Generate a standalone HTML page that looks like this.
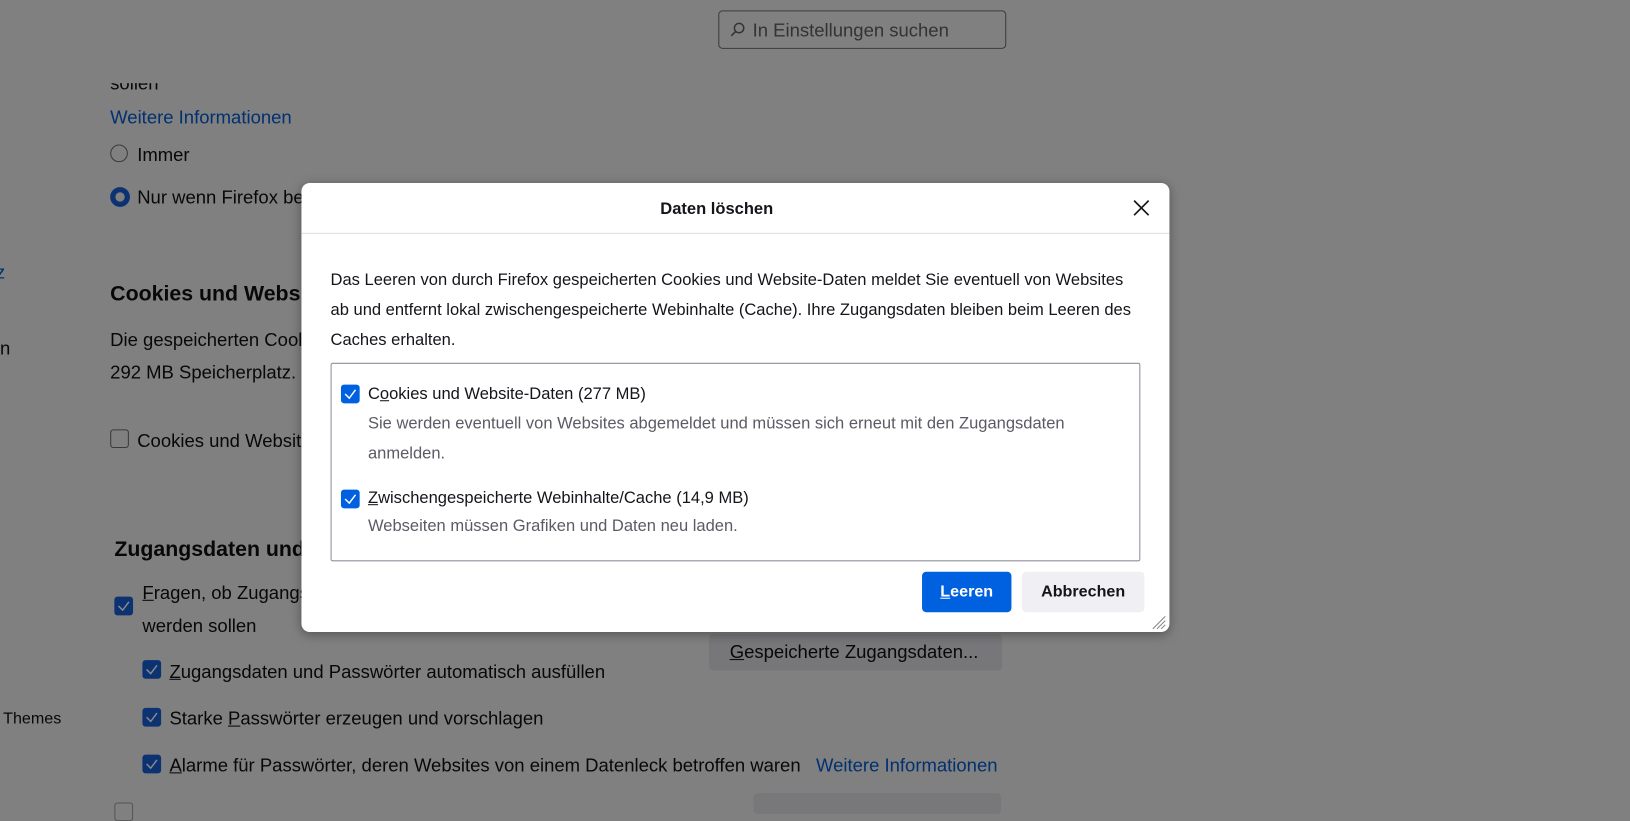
<!DOCTYPE html>
<html><head><meta charset="utf-8"><style>
html,body{margin:0;padding:0;width:1630px;height:806px;overflow:hidden;background:#808080}
#w{position:absolute;left:0;top:0;width:1568px;height:775px;transform:scale(1.0395);transform-origin:0 0;font-family:"Liberation Sans",sans-serif;color:#080808}
.a{position:absolute;white-space:nowrap}
.t{font-size:17.8px}
.lk{color:#003070}
.cb{position:absolute;width:18px;height:18px;border-radius:3px;background:#0c3272}
.cb svg{position:absolute;left:2px;top:2px}
.ucb{position:absolute;width:16px;height:16px;border:1px solid #3a3a3a;border-radius:3px}
.dlg{position:absolute;left:290px;top:176px;width:835px;height:432px;background:#fff;border-radius:8px;box-shadow:0 2px 10px rgba(0,0,0,.35)}
.d{font-size:15.9px;color:#15141a}
.g{color:#5b5b66}
.ck{position:absolute;width:18px;height:18px;border-radius:3px;background:#0061e0}
.ck svg{position:absolute;left:2px;top:2px}
u{text-decoration:underline}
</style></head><body><div id="w">
<div class="a" style="left:691px;top:10px;width:275px;height:35px;border:1px solid #3c3c3c;border-radius:4px"></div>
<svg class="a" style="left:702px;top:21px" width="15" height="15" viewBox="0 0 15 15"><circle cx="9" cy="6" r="4.5" fill="none" stroke="#333" stroke-width="1.4"/><path d="M6 9 L1.5 13.5" stroke="#333" stroke-width="1.5"/></svg>
<div class="a t" style="left:724px;top:19px;color:#333">In Einstellungen suchen</div>
<div class="a t" style="left:106px;top:70px;clip-path:inset(10px 0 0 0)">sollen</div>
<div class="a t lk" style="left:106px;top:103px">Weitere Informationen</div>
<div class="a" style="left:106px;top:139px;width:17px;height:17px;border:1px solid #3a3a3a;border-radius:50%;box-sizing:border-box"></div>
<div class="a t" style="left:132px;top:139px">Immer</div>
<div class="a" style="left:106px;top:180px;width:19px;height:19px;border-radius:50%;background:#0c3272;box-sizing:border-box;border:5px solid #0c3272"><div style="width:9px;height:9px;border-radius:50%;background:#808080"></div></div>
<div class="a t" style="left:132px;top:180px">Nur wenn Firefox be</div>
<div class="a t lk" style="left:-4px;top:252px">z</div>
<div class="a" style="left:106px;top:271px;font-size:20.5px;font-weight:bold">Cookies und Websit</div>
<div class="a t" style="left:0;top:325px">n</div>
<div class="a t" style="left:106px;top:317px">Die gespeicherten Cool</div>
<div class="a t" style="left:106px;top:348px">292 MB Speicherplatz.</div>
<div class="ucb" style="left:106px;top:413px"></div>
<div class="a t" style="left:132px;top:414px">Cookies und Websit</div>
<div class="a" style="left:110px;top:517px;font-size:20.5px;font-weight:bold">Zugangsdaten und</div>
<div class="cb" style="left:110px;top:574px"><svg width="14" height="14"><path d="M2 7 L6 11 L12 3" fill="none" stroke="#8a8a8a" stroke-width="1.4"/></svg></div>
<div class="a t" style="left:137px;top:560px"><u>F</u>ragen, ob Zugangs</div>
<div class="a t" style="left:137px;top:592px">werden sollen</div>
<div class="a" style="left:682px;top:610px;width:282px;height:35px;background:#77777a;border-radius:4px"></div>
<div class="a t" style="left:702px;top:617px"><u>G</u>espeicherte Zugangsdaten...</div>
<div class="cb" style="left:137px;top:635px"><svg width="14" height="14"><path d="M2 7 L6 11 L12 3" fill="none" stroke="#8a8a8a" stroke-width="1.4"/></svg></div>
<div class="a t" style="left:163px;top:636px"><u>Z</u>ugangsdaten und Passwörter automatisch ausfüllen</div>
<div class="a" style="left:3px;top:683px;font-size:15.5px">Themes</div>
<div class="cb" style="left:137px;top:681px"><svg width="14" height="14"><path d="M2 7 L6 11 L12 3" fill="none" stroke="#8a8a8a" stroke-width="1.4"/></svg></div>
<div class="a t" style="left:163px;top:681px">Starke <u>P</u>asswörter erzeugen und vorschlagen</div>
<div class="cb" style="left:137px;top:726px"><svg width="14" height="14"><path d="M2 7 L6 11 L12 3" fill="none" stroke="#8a8a8a" stroke-width="1.4"/></svg></div>
<div class="a t" style="left:163px;top:726px"><u>A</u>larme für Passwörter, deren Websites von einem Datenleck betroffen waren</div>
<div class="a t lk" style="left:785px;top:726px">Weitere Informationen</div>
<div class="ucb" style="left:110px;top:772px;border-color:#555"></div>
<div class="a" style="left:725px;top:763px;width:238px;height:20px;background:#78787a;border-radius:4px"></div>

<div class="dlg">
<div class="a d" style="left:-18px;width:835px;text-align:center;top:17px;font-weight:bold">Daten löschen</div>
<svg class="a" style="left:800px;top:16px" width="16" height="16"><path d="M1 1 L15 15 M15 1 L1 15" stroke="#15141a" stroke-width="1.6"/></svg>
<div class="a" style="left:0;top:48px;width:835px;height:1px;background:#e0e0e6"></div>
<div class="a d" style="left:28px;top:79px;line-height:29px">Das Leeren von durch Firefox gespeicherten Cookies und Website-Daten meldet Sie eventuell von Websites<br>ab und entfernt lokal zwischengespeicherte Webinhalte (Cache). Ihre Zugangsdaten bleiben beim Leeren des<br>Caches erhalten.</div>
<div class="a" style="left:28px;top:173px;width:777px;height:189px;border:1px solid #8f8f9d;border-radius:2px"></div>
<div class="ck" style="left:38px;top:194px"><svg width="14" height="14"><path d="M2 7 L6 11 L12 3" fill="none" stroke="#fff" stroke-width="1.4"/></svg></div>
<div class="a d" style="left:64px;top:195px">C<u>o</u>okies und Website-Daten (277 MB)</div>
<div class="a d g" style="left:64px;top:217px;line-height:29px">Sie werden eventuell von Websites abgemeldet und müssen sich erneut mit den Zugangsdaten<br>anmelden.</div>
<div class="ck" style="left:38px;top:295px"><svg width="14" height="14"><path d="M2 7 L6 11 L12 3" fill="none" stroke="#fff" stroke-width="1.4"/></svg></div>
<div class="a d" style="left:64px;top:295px"><u>Z</u>wischengespeicherte Webinhalte/Cache (14,9 MB)</div>
<div class="a d g" style="left:64px;top:322px">Webseiten müssen Grafiken und Daten neu laden.</div>
<div class="a" style="left:597px;top:374px;width:86px;height:39px;background:#0061e0;border-radius:4px;color:#fff;font-size:15.5px;font-weight:bold;text-align:center;line-height:39px"><u>L</u>eeren</div>
<div class="a" style="left:693px;top:374px;width:118px;height:39px;background:#f0f0f4;border-radius:4px;color:#15141a;font-size:15.5px;font-weight:bold;text-align:center;line-height:39px">Abbrechen</div>
<svg class="a" style="left:816px;top:414px" width="16" height="16"><path d="M15 3 L3 15 M15 7 L7 15 M15 11 L11 15" stroke="#888" stroke-width="1"/></svg>
</div>
</div></body></html>
